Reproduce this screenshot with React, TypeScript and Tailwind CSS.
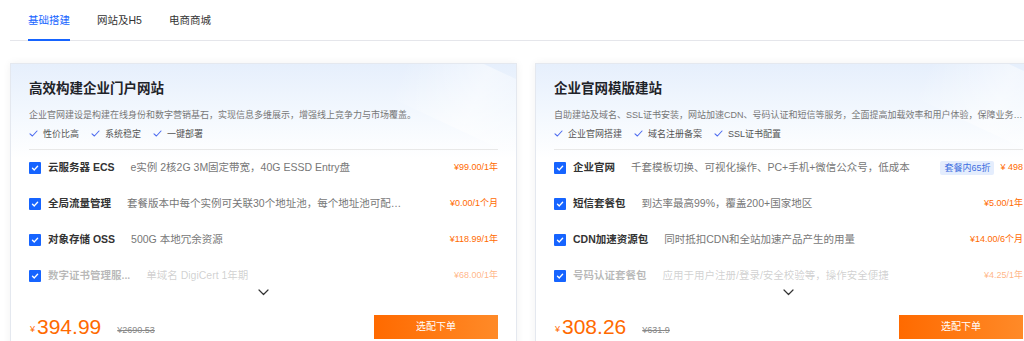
import React from 'react';

type Item = { name: string; desc: string; price: string; badge?: string; faded?: boolean; truncate?: boolean };

type Plan = {
  title: string;
  desc: string;
  tags: string[];
  items: Item[];
  price: string;
  original: string;
};

const PLANS: Plan[] = [
  {
    title: '高效构建企业门户网站',
    desc: '企业官网建设是构建在线身份和数字营销基石，实现信息多维展示，增强线上竞争力与市场覆盖。',
    tags: ['性价比高', '系统稳定', '一键部署'],
    items: [
      { name: '云服务器 ECS', desc: 'e实例 2核2G 3M固定带宽，40G ESSD Entry盘', price: '¥99.00/1年' },
      { name: '全局流量管理', desc: '套餐版本中每个实例可关联30个地址池，每个地址池可配置多个地址', price: '¥0.00/1个月', truncate: true },
      { name: '对象存储 OSS', desc: '500G 本地冗余资源', price: '¥118.99/1年' },
      { name: '数字证书管理服...', desc: '单域名 DigiCert 1年期', price: '¥68.00/1年', faded: true },
    ],
    price: '394.99',
    original: '¥2690.53',
  },
  {
    title: '企业官网模版建站',
    desc: '自助建站及域名、SSL证书安装，网站加速CDN、号码认证和短信等服务，全面提高加载效率和用户体验，保障业务安全稳定运行',
    tags: ['企业官网搭建', '域名注册备案', 'SSL证书配置'],
    items: [
      { name: '企业官网', desc: '千套模板切换、可视化操作、PC+手机+微信公众号，低成本', price: '¥ 498', badge: '套餐内65折' },
      { name: '短信套餐包', desc: '到达率最高99%，覆盖200+国家地区', price: '¥5.00/1年' },
      { name: 'CDN加速资源包', desc: '同时抵扣CDN和全站加速产品产生的用量', price: '¥14.00/6个月' },
      { name: '号码认证套餐包', desc: '应用于用户注册/登录/安全校验等，操作安全便捷', price: '¥4.25/1年', faded: true },
    ],
    price: '308.26',
    original: '¥631.9',
  },
];

const Checkbox = () => (
  <span className="w-3 h-3 shrink-0 rounded-[1px] bg-[#1664ff] flex items-center justify-center">
    <svg width="8" height="8" viewBox="0 0 8 8" fill="none">
      <path d="M1.5 4.2 L3.3 5.9 L6.6 2.3" stroke="white" strokeWidth="1.4" strokeLinecap="round" strokeLinejoin="round" />
    </svg>
  </span>
);

const TagCheck = () => (
  <svg width="9" height="9" viewBox="0 0 9 9" fill="none">
    <path d="M1 4.8 L3.4 7 L8 2" stroke="#4d6bf0" strokeWidth="1.1" strokeLinecap="round" strokeLinejoin="round" />
  </svg>
);

const PlanCard: React.FC<{ plan: Plan }> = ({ plan }) => (
  <div className="w-[507px] shrink-0 border border-[#e4e8ef] shadow-[0_0_8px_rgba(0,0,0,0.06)] bg-[linear-gradient(180deg,#e6effc_0,#f3f8fe_50px,#ffffff_95px)] relative overflow-hidden">
    <div className="absolute -right-10 top-0 w-[160px] h-[70px] rotate-[25deg] bg-[linear-gradient(90deg,rgba(255,255,255,0),rgba(255,255,255,0.5),rgba(255,255,255,0))]" />
    <div className="relative px-[18px] pt-[15px] pb-6">
      <h2 className="text-[13.5px] leading-5 font-bold text-[#1f2329]">{plan.title}</h2>
      <p className="mt-[9px] text-[9px] leading-[14px] text-[#777] truncate">{plan.desc}</p>
      <div className="mt-[5px] flex items-center gap-[12px] text-[9px] leading-[14px] text-[#555]">
        {plan.tags.map((t) => (
          <span key={t} className="flex items-center gap-[5px]">
            <TagCheck />
            {t}
          </span>
        ))}
      </div>
      <div className="mt-2 h-px bg-[#e8e8e8]" />
      <div>
        {plan.items.map((it) => (
          <div key={it.name} className="h-9 flex items-center">
            <Checkbox />
            <span className={`ml-[7px] text-[10.5px] font-bold whitespace-nowrap ${it.faded ? 'text-[#333]/35' : 'text-[#333]'}`}>
              {it.name}
            </span>
            <span className={`ml-4 text-[10.5px] whitespace-nowrap ${it.faded ? 'text-[#777]/35' : 'text-[#777]'} ${it.truncate ? 'max-w-[282px] truncate' : ''}`}>
              {it.desc}
            </span>
            <span className="ml-auto flex items-center gap-[6px]">
              {it.badge && (
                <span className="px-[4px] h-[14px] leading-[14px] rounded-[2px] bg-[#e4edfd] text-[#3d6ee0] text-[9px]">{it.badge}</span>
              )}
              <span className={`text-[9px] whitespace-nowrap ${it.faded ? 'text-[#ff6a00]/50' : 'text-[#ff6a00]'}`}>{it.price}</span>
            </span>
          </div>
        ))}
      </div>
      <div className="-mt-[7px] h-3 flex items-center justify-center">
        <svg width="11" height="7" viewBox="0 0 11 7" fill="none">
          <path d="M1 1 L5.5 5.5 L10 1" stroke="#333" strokeWidth="1.2" strokeLinecap="round" strokeLinejoin="round" />
        </svg>
      </div>
      <div className="mt-4 h-6 flex items-center">
        <span className="ml-[1px] text-[9px] text-[#ff6a00] self-end mb-[2px]">¥</span>
        <span className="ml-[2px] text-[21px] leading-6 text-[#ff6a00]">{plan.price}</span>
        <span className="ml-4 text-[9px] text-[#888] line-through self-end mb-[1px]">{plan.original}</span>
        <button className="ml-auto w-[124px] h-6 bg-[linear-gradient(90deg,#ff6a00,#ff8a28)] text-white text-[10px]">选配下单</button>
      </div>
    </div>
  </div>
);

export default function App() {
  return (
    <div className="w-[1024px] h-[341px] overflow-hidden bg-white font-['Liberation_Sans','Noto_Sans_CJK_SC',sans-serif]">
      <div className="ml-[10px] pl-[18px] flex gap-[27px] border-b border-[#e5e6eb] text-[10.5px]">
        <span className="pt-[13px] pb-[10px] border-b-2 border-[#1664ff] text-[#1664ff] -mb-px">基础搭建</span>
        <span className="pt-[13px] pb-[10px] text-[#333]">网站及H5</span>
        <span className="pt-[13px] pb-[10px] text-[#333]">电商商城</span>
      </div>
      <div className="mt-[22px] pl-[10px] flex gap-[18px]">
        {PLANS.map((p) => (
          <PlanCard key={p.title} plan={p} />
        ))}
      </div>
    </div>
  );
}
